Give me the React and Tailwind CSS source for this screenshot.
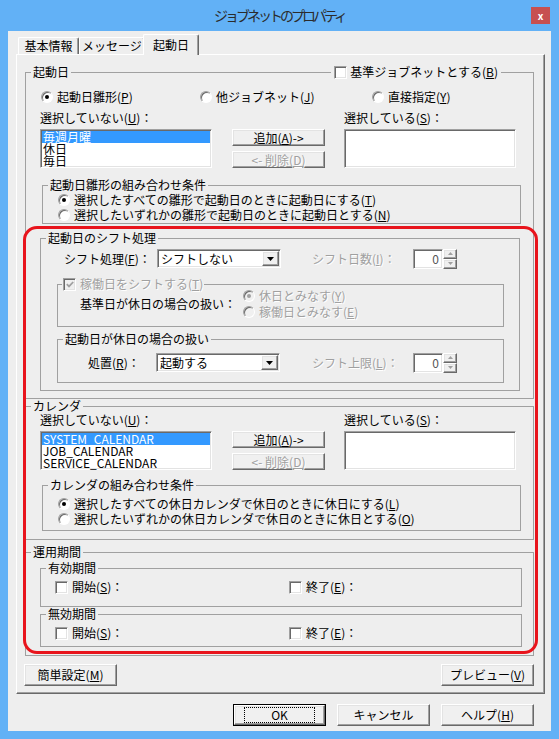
import React from 'react';

// classic win32 bevels
const sunken =
  'border border-t-[#a0a0a0] border-l-[#a0a0a0] border-b-white border-r-white shadow-[inset_1px_1px_0_#696969,inset_-1px_-1px_0_#e3e3e3]';
const raised =
  'border border-t-white border-l-white border-b-[#696969] border-r-[#696969] shadow-[inset_-1px_-1px_0_#a0a0a0,inset_1px_1px_0_#e3e3e3]';
const dim = 'text-[#a0a0a0] [text-shadow:1px_1px_0_#fff]';

const U = ({ children }) => <span className="underline underline-offset-[1px]">{children}</span>;

const Radio = ({ checked, disabled }) => (
  <span
    className={`w-[12px] h-[12px] shrink-0 rounded-full flex items-center justify-center border border-t-[#a0a0a0] border-l-[#a0a0a0] border-b-white border-r-white shadow-[inset_1px_1px_0_#696969] ${
      disabled ? 'bg-[#f0f0f0]' : 'bg-white'
    }`}
  >
    {checked && <span className={`w-[4px] h-[4px] rounded-full ${disabled ? 'bg-[#a0a0a0]' : 'bg-black'}`} />}
  </span>
);

const Check = ({ checked, disabled }) => (
  <span className={`w-[13px] h-[13px] shrink-0 flex items-center justify-center ${sunken} ${disabled ? 'bg-[#f0f0f0]' : 'bg-white'}`}>
    {checked && (
      <svg width="8" height="7" viewBox="0 0 8 7">
        <polyline points="0.8,3.2 3,5.4 7.2,1" fill="none" stroke={disabled ? '#a0a0a0' : '#000'} strokeWidth="1.8" />
      </svg>
    )}
  </span>
);

const RadioItem = ({ checked, disabled, className = '', children }) => (
  <div className={`flex items-center ${className}`}>
    <Radio checked={checked} disabled={disabled} />
    <span className={`ml-[4px] whitespace-nowrap ${disabled ? dim : ''}`}>{children}</span>
  </div>
);

const Group = ({ label, className = '', children }) => (
  <fieldset className={`border border-[#a0a0a0] ${className}`}>
    <legend className="ml-[5px] px-[2px] leading-[14px]">{label}</legend>
    {children}
  </fieldset>
);

const ListBox = ({ items = [] }) => (
  <div className={`w-[172px] h-[39px] bg-white p-px ${sunken}`}>
    {items.map((it, i) => (
      <div key={it} className={`h-[12px] leading-[12px] pl-[1px] whitespace-nowrap ${i === 0 ? 'bg-[#3399ff] text-white' : ''}`}>
        {it}
      </div>
    ))}
  </div>
);

const Btn = ({ disabled, className = '', children }) => (
  <div className={`flex items-center justify-center bg-[#f0f0f0] whitespace-nowrap ${raised} ${disabled ? dim : ''} ${className}`}>
    {children}
  </div>
);

const Combo = ({ value }) => (
  <div className={`w-[124px] h-[19px] flex bg-white p-px ${sunken}`}>
    <div className="flex-1 pl-[2px] leading-[15px]">{value}</div>
    <div className={`w-[17px] h-full flex items-center justify-center bg-[#f0f0f0] ${raised}`}>
      <svg width="7" height="4" viewBox="0 0 7 4">
        <path d="M0 0h7L3.5 4z" fill="#000" />
      </svg>
    </div>
  </div>
);

const Spin = () => (
  <div className="flex h-[20px]">
    <div className={`w-[30px] h-full bg-white p-px pr-[3px] flex items-center justify-end text-[#555] ${sunken}`}>0</div>
    <div className="w-[14px] flex flex-col">
      <div className={`flex-1 flex items-center justify-center bg-[#f0f0f0] ${raised}`}>
        <svg width="5" height="3" viewBox="0 0 5 3">
          <path d="M0 3h5L2.5 0z" fill="#a0a0a0" />
        </svg>
      </div>
      <div className={`flex-1 flex items-center justify-center bg-[#f0f0f0] ${raised}`}>
        <svg width="5" height="3" viewBox="0 0 5 3">
          <path d="M0 0h5L2.5 3z" fill="#a0a0a0" />
        </svg>
      </div>
    </div>
  </div>
);

const Tab = ({ active, className = '', children }) => (
  <div
    className={`flex items-center justify-center border-t border-l border-t-white border-l-white border-r border-r-[#696969] shadow-[inset_-1px_0_0_#a0a0a0] rounded-t-[2px] bg-[#eeeeee] ${
      active ? 'h-[21px] -mb-px relative z-10' : 'h-[17px]'
    } ${className}`}
  >
    {children}
  </div>
);

const PickLists = ({ items }) => (
  <div className="mt-[4px] flex pl-[14px] h-[39px]">
    <ListBox items={items} />
    <div className="ml-[20px] w-[93px] flex flex-col gap-[5px]">
      <Btn className="h-[17px]">
        追加(<U>A</U>)-&gt;
      </Btn>
      <Btn disabled className="h-[17px]">
        &lt;- 削除(<U>D</U>)
      </Btn>
    </div>
    <div className="ml-[19px]">
      <ListBox />
    </div>
  </div>
);

const ListLabels = ({ className = '' }) => (
  <div className={`flex pl-[14px] h-[14px] leading-[14px] ${className}`}>
    <span className="w-[304px]">
      選択していない(<U>U</U>)：
    </span>
    <span>
      選択している(<U>S</U>)：
    </span>
  </div>
);

const PeriodRow = () => (
  <div className="mt-[5px] h-[14px] flex items-center pl-[14px]">
    <div className="w-[234px] flex items-center">
      <Check />
      <span className="ml-[4px]">
        開始(<U>S</U>)：
      </span>
    </div>
    <div className="flex items-center">
      <Check />
      <span className="ml-[4px]">
        終了(<U>E</U>)：
      </span>
    </div>
  </div>
);

export default function App() {
  return (
    <div className="relative w-[559px] h-[739px] bg-[#62b1f6] flex flex-col text-[12px] text-black font-['Noto_Sans_CJK_JP','Noto_Sans',sans-serif]">
      {/* title bar */}
      <div className="flex h-[31px]">
        <div className="w-[28px]" />
        <div className="flex-1 flex items-center justify-center text-[14px] tracking-[-3px] text-[#2b2b2b]">ジョブネットのプロパティ</div>
        <div className="w-[19px] h-[17px] mt-[7px] mr-[9px] bg-[#c75050] flex items-center justify-center text-white text-[10px] font-bold leading-none">
          x
        </div>
      </div>

      {/* client */}
      <div className="mx-[8px] h-[700px] bg-[#eeeeee] flex flex-col">
        <div className="flex items-end h-[23px] pl-[10px]">
          <Tab className="w-[61px]">基本情報</Tab>
          <Tab className="w-[66px]">メッセージ</Tab>
          <Tab active className="w-[56px] -ml-[2px]">
            起動日
          </Tab>
        </div>

        <div className="ml-[8px] w-[529px] h-[640px] pt-[10px] pl-[8px] border-t border-l border-t-white border-l-white border-r border-b border-r-[#696969] border-b-[#696969] shadow-[inset_-1px_-1px_0_#a0a0a0]">
          {/* 起動日 */}
          <fieldset className="w-[509px] border border-[#a0a0a0] pb-[7px]">
            <legend className="w-full h-[14px] flex items-center">
              <span className="w-[5px] h-px bg-[#a0a0a0]" />
              <span className="px-[2px] leading-[14px]">起動日</span>
              <span className="flex-1 h-px bg-[#a0a0a0]" />
              <span className="ml-[3px] flex items-center">
                <Check />
                <span className="ml-[3px] leading-[14px]">
                  基準ジョブネットとする(<U>B</U>)
                </span>
              </span>
              <span className="ml-[3px] w-[32px] h-px bg-[#a0a0a0]" />
            </legend>

            <div className="mt-[11px] h-[14px] flex items-center pl-[15px]">
              <RadioItem checked className="w-[159px]">
                起動日雛形(<U>P</U>)
              </RadioItem>
              <RadioItem className="w-[172px]">
                他ジョブネット(<U>J</U>)
              </RadioItem>
              <RadioItem>
                直接指定(<U>Y</U>)
              </RadioItem>
            </div>

            <ListLabels className="mt-[7px]" />
            <div className="mt-[1px]">
              <PickLists items={['毎週月曜', '休日', '毎日']} />
            </div>

            <Group label="起動日雛形の組み合わせ条件" className="mt-[10px] ml-[16px] w-[479px] pb-[1px]">
              <div className="pl-[15px]">
                <RadioItem checked className="h-[15px]">
                  選択したすべての雛形で起動日のときに起動日にする(<U>T</U>)
                </RadioItem>
                <RadioItem className="h-[15px]">
                  選択したいずれかの雛形で起動日のときに起動日とする(<U>N</U>)
                </RadioItem>
              </div>
            </Group>

            <Group label="起動日のシフト処理" className="mt-[7px] ml-[14px] w-[480px] pb-[7px]">
              <div className="mt-[4px] h-[19px] flex items-center pl-[23px]">
                <span className="w-[93px]">
                  シフト処理(<U>F</U>)：
                </span>
                <Combo value="シフトしない" />
                <span className={`ml-[31px] w-[101px] ${dim}`}>
                  シフト日数(<U>I</U>)：
                </span>
                <Spin />
              </div>

              <fieldset className="mt-[9px] ml-[16px] w-[447px] pb-[6px] border border-[#a0a0a0]">
                <legend className="ml-[4px] px-[1px] h-[14px] flex items-center">
                  <Check checked disabled />
                  <span className={`ml-[4px] ${dim}`}>
                    稼働日をシフトする(<U>T</U>)
                  </span>
                </legend>
                <div className="-mt-[3px] flex items-center pl-[22px]">
                  <span className="w-[163px]">基準日が休日の場合の扱い：</span>
                  <div>
                    <RadioItem checked disabled className="h-[16px]">
                      休日とみなす(<U>Y</U>)
                    </RadioItem>
                    <RadioItem disabled className="h-[16px]">
                      稼働日とみなす(<U>E</U>)
                    </RadioItem>
                  </div>
                </div>
              </fieldset>

              <Group label="起動日が休日の場合の扱い" className="mt-[5px] ml-[16px] w-[447px] pb-[10px]">
                <div className="mt-[7px] h-[19px] flex items-center pl-[30px]">
                  <span className="w-[68px]">
                    処置(<U>R</U>)：
                  </span>
                  <Combo value="起動する" />
                  <span className={`ml-[32px] w-[101px] ${dim}`}>
                    シフト上限(<U>L</U>)：
                  </span>
                  <Spin />
                </div>
              </Group>
            </Group>
          </fieldset>

          {/* カレンダ */}
          <Group label="カレンダ" className="w-[509px] pb-[8px]">
            <ListLabels />
            <PickLists items={['SYSTEM_CALENDAR', 'JOB_CALENDAR', 'SERVICE_CALENDAR']} />
            <Group label="カレンダの組み合わせ条件" className="mt-[8px] ml-[16px] w-[479px] pb-[4px]">
              <div className="mt-[4px] pl-[15px]">
                <RadioItem checked className="h-[15px]">
                  選択したすべての休日カレンダで休日のときに休日にする(<U>L</U>)
                </RadioItem>
                <RadioItem className="h-[15px]">
                  選択したいずれかの休日カレンダで休日のときに休日とする(<U>O</U>)
                </RadioItem>
              </div>
            </Group>
          </Group>

          {/* 運用期間 */}
          <Group label="運用期間" className="mt-[5px] w-[509px] pb-[8px]">
            <Group label="有効期間" className="mt-[2px] ml-[14px] w-[482px] pb-[12px]">
              <PeriodRow />
            </Group>
            <Group label="無効期間" className="ml-[14px] w-[482px] pb-[6px]">
              <PeriodRow />
            </Group>
          </Group>

          <div className="mt-[8px] -ml-px w-[510px] flex justify-between">
            <Btn className="w-[93px] h-[22px]">
              簡単設定(<U>M</U>)
            </Btn>
            <Btn className="w-[93px] h-[22px]">
              プレビュー(<U>V</U>)
            </Btn>
          </div>
        </div>

        <div className="mt-[10px] pl-[225px] flex gap-[11px]">
          <div className="w-[93px] h-[22px] border border-black">
            <Btn className="w-full h-full">
              <span className="px-[26px] border border-dotted border-black leading-[14px]">OK</span>
            </Btn>
          </div>
          <Btn className="w-[93px] h-[22px]">キャンセル</Btn>
          <Btn className="w-[93px] h-[22px]">
            ヘルプ(<U>H</U>)
          </Btn>
        </div>
      </div>

      {/* red annotation */}
      <div className="absolute left-[23px] top-[226px] w-[515px] h-[428px] border-[3px] border-[#e8141c] rounded-[14px] pointer-events-none" />
    </div>
  );
}
